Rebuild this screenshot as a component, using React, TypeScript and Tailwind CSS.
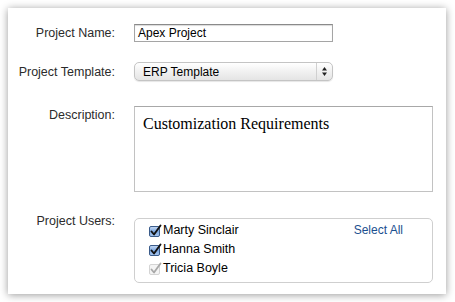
import React from "react";

function CheckIcon({ disabled }: { disabled?: boolean }) {
  if (disabled) {
    return (
      <svg width="14" height="14" viewBox="0 0 14 14" className="shrink-0">
        <rect x="1.5" y="2.5" width="10" height="10" rx="1.5" fill="#f4f4f4" stroke="#d4d4d4" />
        <path d="M3.5 7.5 L6 10.5 L12.5 1.5" fill="none" stroke="#a8a8a8" strokeWidth="1.8" strokeLinecap="round" strokeLinejoin="round" />
      </svg>
    );
  }
  return (
    <svg width="14" height="14" viewBox="0 0 14 14" className="shrink-0">
      <defs>
        <linearGradient id="cb" x1="0" y1="0" x2="0" y2="1">
          <stop offset="0" stopColor="#c9dcf5" />
          <stop offset="0.5" stopColor="#7ea8e0" />
          <stop offset="1" stopColor="#a9c8f0" />
        </linearGradient>
      </defs>
      <rect x="1.5" y="2.5" width="10" height="10" rx="1.5" fill="url(#cb)" stroke="#3a5b8a" />
      <path d="M3.5 7.5 L6 10.5 L12.5 1.5" fill="none" stroke="#111" strokeWidth="1.9" strokeLinecap="round" strokeLinejoin="round" />
    </svg>
  );
}

function Label({ children, className = "" }: { children: React.ReactNode; className?: string }) {
  return (
    <div className={"w-[107px] shrink-0 text-right text-[12.5px] leading-[14px] text-[#2b2b2b] " + className}>
      {children}
    </div>
  );
}

export default function App() {
  const users = [
    { name: "Marty Sinclair", disabled: false },
    { name: "Hanna Smith", disabled: false },
    { name: "Tricia Boyle", disabled: true },
  ];

  return (
    <div className="w-[455px] h-[302px] bg-white pt-[8px] pl-[8px]" style={{ fontFamily: '"Liberation Sans", Arial, sans-serif' }}>
      <div className="w-[438px] h-[286px] bg-white shadow-[0_1px_8px_rgba(0,0,0,0.4)] pt-[16px]">
        {/* Project Name */}
        <div className="flex items-center gap-[19px]">
          <Label>Project Name:</Label>
          <div className="w-[199px] h-[18px] border border-[#a5a5a5] border-t-[#8a8a8a] shadow-[inset_0_1px_1px_rgba(0,0,0,0.15)] pl-[3px] text-[12px] leading-[16px] text-black">
            Apex Project
          </div>
        </div>

        {/* Project Template */}
        <div className="flex items-center gap-[19px] mt-[20px]">
          <Label>Project Template:</Label>
          <div className="w-[199px] h-[19px] rounded-[5px] border border-[#c4c4c4] bg-gradient-to-b from-[#ffffff] via-[#f1f1f1] to-[#e4e4e4] shadow-[0_1px_1px_rgba(0,0,0,0.1)] flex items-center">
            <div className="flex-1 pl-[8px] text-[12px] leading-[14px] text-black">ERP Template</div>
            <div className="w-[16px] h-full border-l border-[#d0d0d0] flex items-center justify-center">
              <svg width="7" height="11" viewBox="0 0 7 11">
                <path d="M3.5 1 L6 4.5 L1 4.5 Z" fill="#222" />
                <path d="M3.5 10 L6 6.5 L1 6.5 Z" fill="#222" />
              </svg>
            </div>
          </div>
        </div>

        {/* Description */}
        <div className="flex items-start gap-[19px] mt-[25px]">
          <Label className="pt-[2px]">Description:</Label>
          <div
            className="w-[299px] h-[86px] border border-[#c2c2c2] border-t-[#a8a8a8] pt-[7px] pl-[8px] text-[16px] leading-[20px] text-black"
            style={{ fontFamily: '"Liberation Serif", "Times New Roman", serif' }}
          >
            Customization Requirements
          </div>
        </div>

        {/* Project Users */}
        <div className="flex items-start gap-[19px] mt-[26px]">
          <Label className="-mt-[4px]">Project Users:</Label>
          <div className="relative w-[299px] h-[65px] rounded-[5px] border border-[#cfcfcf] pt-[2px] pl-[13px]">
            {users.map((u) => (
              <div key={u.name} className="flex items-center h-[19px] text-[12.5px] text-black">
                <CheckIcon disabled={u.disabled} />
                <span className="ml-[1px]">{u.name}</span>
              </div>
            ))}
            <span className="absolute right-[29px] top-[3px] text-[12px] leading-[16px] text-[#1b4f8f]">Select All</span>
          </div>
        </div>
      </div>
    </div>
  );
}
